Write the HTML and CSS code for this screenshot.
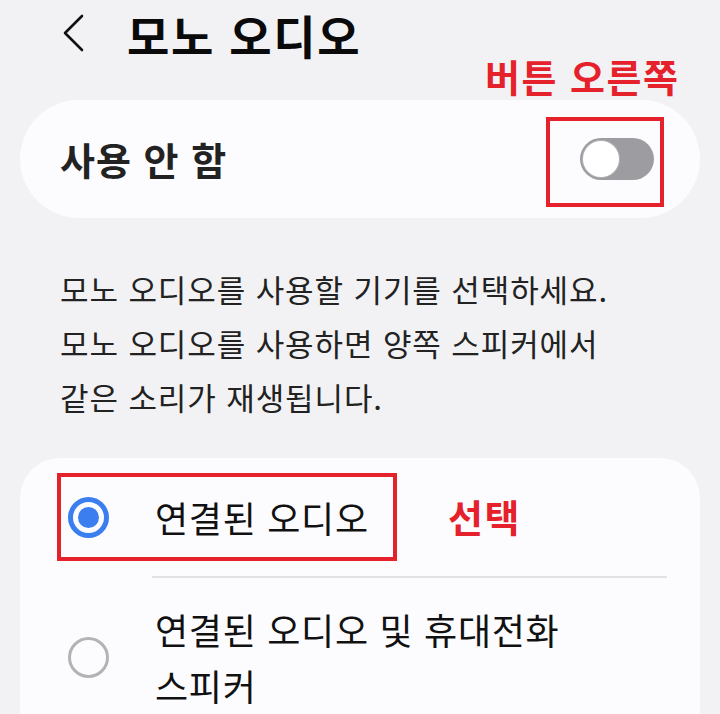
FILE: index.html
```html
<!DOCTYPE html>
<html lang="ko">
<head>
<meta charset="utf-8">
<link rel="stylesheet" href="styles.css">
</head>
<body>
<div class="page">
  <header class="header">
    <svg class="back" width="26" height="38" viewBox="0 0 26 38"><polyline points="21,2 4,19 21,36" fill="none" stroke="#111" stroke-width="2.6" stroke-linecap="round" stroke-linejoin="round"/></svg>
    <h1 class="title">모노 오디오</h1>
  </header>
  <div class="note note-top">버튼 오른쪽</div>

  <section class="card switch-card">
    <span class="switch-label">사용 안 함</span>
    <span class="toggle"><span class="thumb"></span></span>
    <span class="mark mark-toggle"></span>
  </section>

  <p class="desc">모노 오디오를 사용할 기기를 선택하세요.<br>모노 오디오를 사용하면 양쪽 스피커에서<br>같은 소리가 재생됩니다.</p>

  <section class="card list-card">
    <div class="option first">
      <span class="radio on"><span class="dot"></span></span>
      <span class="opt-text">연결된 오디오</span>
      <span class="mark mark-radio"></span>
      <span class="note note-select">선택</span>
    </div>
    <div class="divider"></div>
    <div class="option second">
      <span class="radio"></span>
      <span class="opt-text">연결된 오디오 및 휴대전화<br>스피커</span>
    </div>
  </section>
</div>
</body>
</html>
```

FILE: styles.css
```css
html, body {
  margin: 0;
  padding: 0;
  background: #f2f2f4;
  height: 100%;
  overflow: hidden;
}
body {
  font-family: "Noto Sans CJK KR", "Noto Sans", sans-serif;
  color: #1a1a1a;
}
.page {
  position: relative;
  width: 720px;
  height: 714px;
  overflow: hidden;
}
.header {
  height: 68px;
  display: flex;
  align-items: center;
  padding-left: 61px;
}
.back {
  display: block;
  margin-right: 40px;
  margin-top: -3px;
}
.title {
  margin: 0;
  font-size: 46px;
  font-weight: 700;
  line-height: 66px;
  color: #0a0a0a;
  letter-spacing: 1.6px;
}
.note {
  position: absolute;
  color: #e5212b;
  font-weight: 700;
  white-space: nowrap;
}
.note-top {
  left: 485px;
  top: 52px;
  font-size: 38px;
  line-height: 48px;
  letter-spacing: 1.5px;
}
.card {
  background: #fcfcfe;
  margin: 0 20px;
  position: relative;
}
.switch-card {
  margin-top: 32px;
  height: 118px;
  border-radius: 59px;
  display: flex;
  align-items: center;
  justify-content: space-between;
  padding: 0 46px 0 40px;
}
.switch-label {
  font-size: 38px;
  font-weight: 700;
  line-height: 48px;
  color: #222;
  letter-spacing: 1px;
}
.toggle {
  width: 74px;
  height: 42px;
  border-radius: 21px;
  background: #9d9da1;
  display: flex;
  align-items: center;
  padding-left: 3px;
  box-sizing: border-box;
}
.thumb {
  width: 36px;
  height: 36px;
  border-radius: 50%;
  background: #ffffff;
  box-shadow: 0 0 0 1px #b4b4b8;
}
.mark {
  position: absolute;
  border: 4px solid #e5212b;
  box-sizing: border-box;
}
.mark-toggle {
  left: 526px;
  top: 17px;
  width: 118px;
  height: 90px;
}
.desc {
  margin: 44px 0 0;
  padding: 0 60px;
  font-size: 31px;
  line-height: 54px;
  color: #222;
  letter-spacing: 0.9px;
}
.list-card {
  margin-top: 34px;
  height: 300px;
  border-radius: 40px 40px 0 0;
}
.option {
  display: flex;
  align-items: center;
  padding-left: 48px;
  position: relative;
}
.option.first {
  height: 118px;
}
.option.second {
  padding-top: 23px;
}
.radio {
  width: 41px;
  height: 41px;
  border-radius: 50%;
  border: 3px solid #b3b3b3;
  box-sizing: border-box;
  flex: none;
  display: flex;
  align-items: center;
  justify-content: center;
}
.radio.on {
  border: 5px solid #3b7ef0;
}
.dot {
  width: 21px;
  height: 21px;
  border-radius: 50%;
  background: #3b7ef0;
}
.opt-text {
  margin-left: 46px;
  font-size: 36px;
  line-height: 56px;
  color: #111;
  letter-spacing: 0.7px;
}
.mark-radio {
  left: 37px;
  top: 15px;
  width: 340px;
  height: 88px;
}
.note-select {
  left: 428px;
  top: 34px;
  font-size: 38px;
  line-height: 48px;
  letter-spacing: 1.5px;
}
.divider {
  height: 2px;
  background: #e2e2e4;
  margin: 0 33px 0 132px;
}
```
